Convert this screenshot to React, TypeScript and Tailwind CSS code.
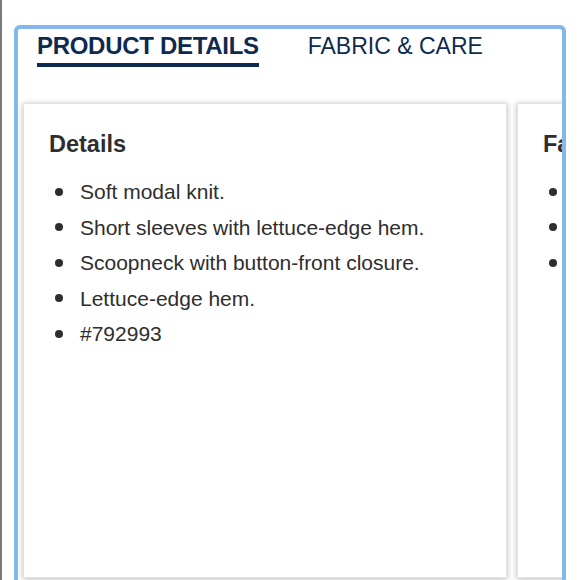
import React from 'react';

const details = [
  'Soft modal knit.',
  'Short sleeves with lettuce-edge hem.',
  'Scoopneck with button-front closure.',
  'Lettuce-edge hem.',
  '#792993',
];

const fabric = ['Modal/spandex.', 'Machine wash.', 'Imported.'];

const Card: React.FC<{ title: string; items: string[] }> = ({ title, items }) => (
  <div className="w-[484px] h-[475px] shrink-0 bg-white border border-[#e2e2e2] shadow-[0_1px_6px_rgba(0,0,0,0.28)] pt-[26px] px-[25px]">
    <h2 className="text-[23.5px] leading-[28px] font-bold text-[#2e2e2e]">{title}</h2>
    <ul className="mt-[16px]">
      {items.map((item) => (
        <li key={item} className="flex items-center text-[21px] leading-[35.5px] text-[#2e2e2e] whitespace-nowrap">
          <span className="ml-[6px] w-[8px] h-[8px] rounded-full bg-[#2e2e2e] shrink-0" />
          <span className="ml-[17px]">{item}</span>
        </li>
      ))}
    </ul>
  </div>
);

export default function App() {
  return (
    <div className="w-[580px] h-[580px] overflow-hidden bg-white border-l-2 border-[#7a7a7a] pl-[12px] pt-[25px] font-['Liberation_Sans',Arial,sans-serif]">
      <div className="w-[552px] h-[560px] border-4 border-b-0 border-[#86b6ee] rounded-t-[6px] overflow-hidden bg-white">
        {/* Tabs */}
        <div className="flex items-start gap-[49px] pl-[19px] pt-[3px]">
          <button className="flex flex-col items-stretch">
            <span className="text-[24px] leading-[28px] font-bold tracking-[-0.3px] text-[#0f2a4f]">
              PRODUCT DETAILS
            </span>
            <span className="mt-[3px] h-[4px] bg-[#0f2a4f]" />
          </button>
          <button className="text-[23px] leading-[28px] text-[#0f2a4f]">FABRIC &amp; CARE</button>
        </div>

        {/* Panels */}
        <div className="flex gap-[10px] pl-[5px] mt-[36px]">
          <Card title="Details" items={details} />
          <Card title="Fabric & Care" items={fabric} />
        </div>
      </div>
    </div>
  );
}
